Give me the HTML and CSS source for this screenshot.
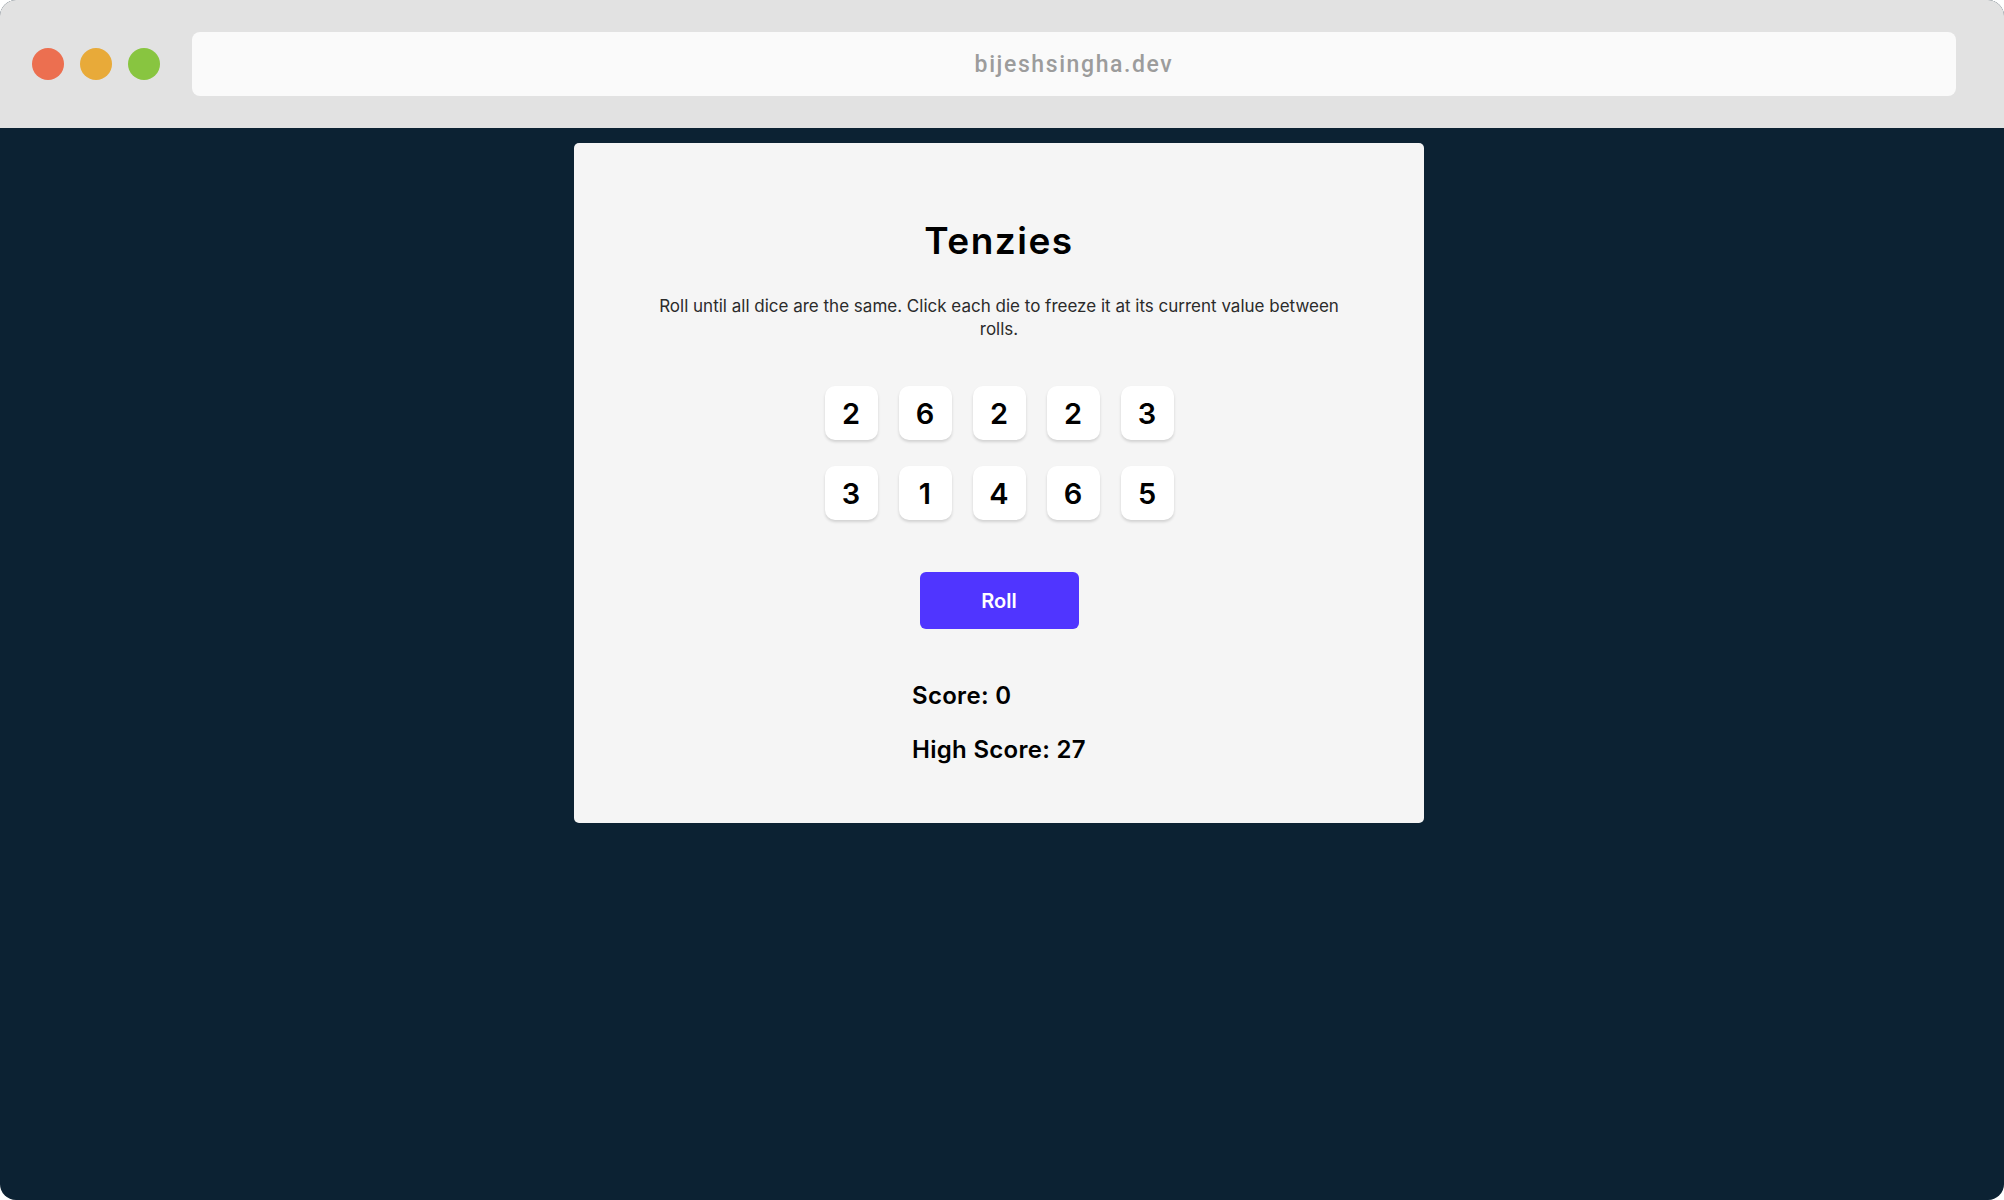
FILE: index.html
```html
<!DOCTYPE html>
<html lang="en">
<head>
<meta charset="utf-8">
<title>Tenzies</title>
<link rel="stylesheet" href="styles.css">
</head>
<body>
<div class="window">
  <header class="chrome">
    <div class="lights">
      <span class="light red"></span>
      <span class="light yellow"></span>
      <span class="light green"></span>
    </div>
    <div class="urlbar">bijeshsingha.dev</div>
  </header>
  <main class="stage">
    <section class="card">
      <h1 class="title">Tenzies</h1>
      <p class="desc">Roll until all dice are the same. Click each die to freeze it at its current value between rolls.</p>
      <div class="dice">
        <button class="die">2</button>
        <button class="die">6</button>
        <button class="die">2</button>
        <button class="die">2</button>
        <button class="die">3</button>
        <button class="die">3</button>
        <button class="die">1</button>
        <button class="die">4</button>
        <button class="die">6</button>
        <button class="die">5</button>
      </div>
      <button class="roll">Roll</button>
      <div class="scores">
        <p class="score">Score: 0</p>
        <p class="score">High Score: 27</p>
      </div>
    </section>
  </main>
</div>
</body>
</html>
```

FILE: styles.css
```css
* { box-sizing: border-box; }

html, body {
  margin: 0;
  padding: 0;
  background: #ffffff;
}

.window {
  width: 2004px;
  height: 1200px;
  border-radius: 16px;
  overflow: hidden;
  background: #0c2233;
  display: flex;
  flex-direction: column;
}

.chrome {
  height: 128px;
  flex: 0 0 128px;
  background: #e2e2e2;
  display: flex;
  align-items: center;
  padding: 0 48px 0 32px;
  gap: 32px;
}

.lights {
  display: flex;
  gap: 16px;
}

.light {
  width: 32px;
  height: 32px;
  border-radius: 50%;
  display: block;
}
.red { background: #ec6f50; }
.yellow { background: #e8aa39; }
.green { background: #88c540; }

.urlbar {
  flex: 1;
  height: 64px;
  border-radius: 8px;
  background: #fafafa;
  display: flex;
  align-items: center;
  justify-content: center;
  font-family: Roboto, "Liberation Sans", sans-serif;
  font-weight: 500;
  font-size: 23px;
  letter-spacing: 1.6px;
  color: #9c9c9c;
}

.stage {
  flex: 1;
  display: flex;
  justify-content: center;
  align-items: flex-start;
  padding: 15px 6px 0 0;
}

.card {
  width: 850px;
  height: 680px;
  background: #f5f5f5;
  border-radius: 5px;
  display: flex;
  flex-direction: column;
  align-items: center;
  padding-top: 76px;
  font-family: Inter, "Liberation Sans", sans-serif;
  color: #000;
}

.title {
  margin: 0;
  font-size: 37px;
  line-height: 44px;
  font-weight: 600;
  letter-spacing: 1.5px;
}

.desc {
  margin: 32px 0 0;
  width: 700px;
  text-align: center;
  font-size: 17px;
  line-height: 23px;
  font-weight: 400;
  color: #2b2b2b;
}

.dice {
  margin-top: 45px;
  display: grid;
  grid-template-columns: repeat(5, 53px);
  column-gap: 21px;
  row-gap: 26px;
}

.die {
  width: 53px;
  height: 54px;
  border: none;
  border-radius: 10px;
  background: #ffffff;
  box-shadow: 0 2px 3px rgba(0, 0, 0, 0.15);
  font-family: Inter, "Liberation Sans", sans-serif;
  font-size: 29px;
  font-weight: 600;
  color: #000;
  padding: 0;
  display: flex;
  align-items: center;
  justify-content: center;
}

.roll {
  margin-top: 52px;
  width: 159px;
  height: 57px;
  border: none;
  border-radius: 6px;
  background: #5035ff;
  color: #ffffff;
  font-family: Inter, "Liberation Sans", sans-serif;
  font-size: 20px;
  font-weight: 600;
  padding: 0;
}

.scores {
  margin-top: 52px;
  display: flex;
  flex-direction: column;
  gap: 24px;
}

.score {
  margin: 0;
  font-size: 24px;
  line-height: 30px;
  font-weight: 600;
  letter-spacing: 0.3px;
}
```
